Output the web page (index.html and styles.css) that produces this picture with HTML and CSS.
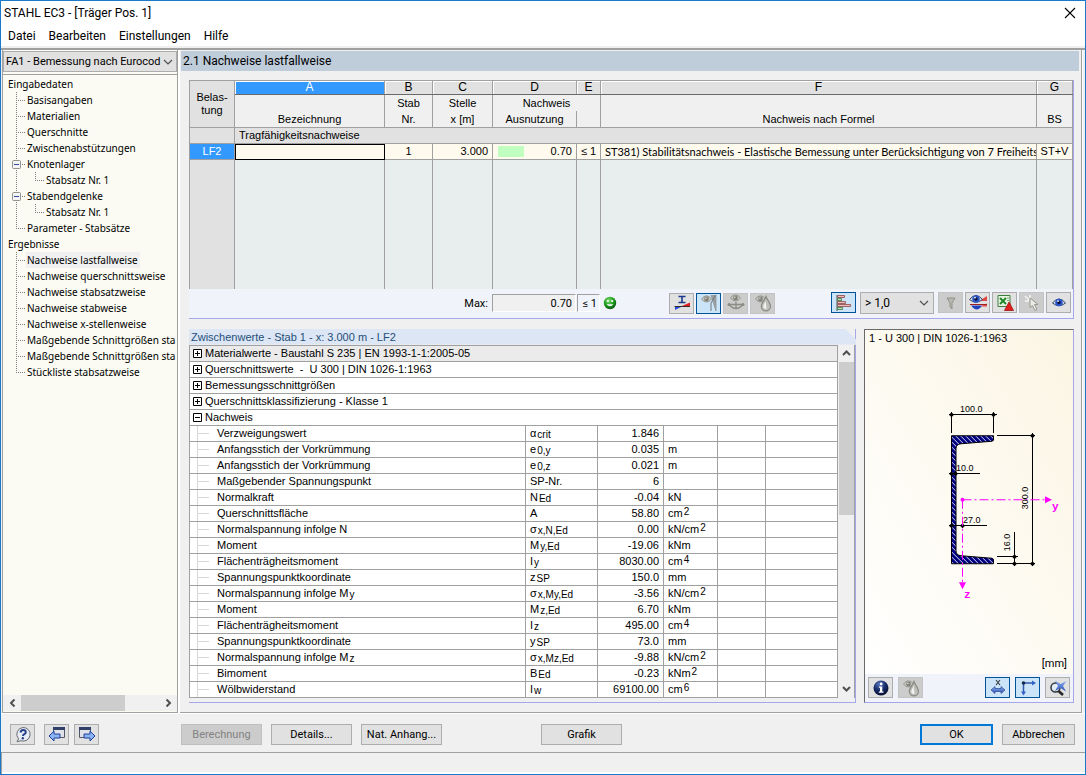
FILE: index.html
```html
<!DOCTYPE html>
<html lang="de">
<head>
<meta charset="utf-8">
<title>STAHL EC3 - [Träger Pos. 1]</title>
<link rel="stylesheet" href="styles.css">
</head>
<body>
<svg class="defs" aria-hidden="true">
  <defs>
    <linearGradient id="gBlue" x1="0" y1="0" x2="0" y2="1"><stop offset="0" stop-color="#8fb0f0"/><stop offset="1" stop-color="#2a50b8"/></linearGradient>
    <radialGradient id="gGreen" cx=".4" cy=".3" r=".7"><stop offset="0" stop-color="#7fe070"/><stop offset=".6" stop-color="#1c9a1c"/><stop offset="1" stop-color="#0a5a10"/></radialGradient>
    <radialGradient id="gNavy" cx=".4" cy=".25" r=".8"><stop offset="0" stop-color="#5a78c0"/><stop offset=".5" stop-color="#182c6a"/><stop offset="1" stop-color="#060c28"/></radialGradient>
    <symbol id="chev" viewBox="0 0 10 6"><path d="M1 1l4 4 4-4" fill="none" stroke="#505050" stroke-width="1.2"/></symbol>
    <symbol id="sbchev" viewBox="0 0 9 6"><path d="M1 5l3.500-3.500L8 5" fill="none" stroke="#505050" stroke-width="2"/></symbol>
    <symbol id="eyegray" viewBox="0 0 12 8"><path d="M.5 4Q6-3 11.500 4Q6 10.500.5 4Z" fill="#c8c8c4" stroke="#909088"/><circle cx="6" cy="4" r="2.600" fill="#84847c"/><circle cx="5.300" cy="3.200" r=".8" fill="#e8e8e8"/></symbol>
    <symbol id="eyeblue" viewBox="0 0 14 10"><path d="M.5 5.500Q7-2.500 13.500 5.500Q7 11 .5 5.500Z" fill="#dfe6f8" stroke="#30405c"/><circle cx="7" cy="5" r="3.800" fill="#2c55c8"/><circle cx="7" cy="5" r="1.700" fill="#0a1440"/><circle cx="6" cy="3.600" r=".9" fill="#fff"/></symbol>
    <symbol id="drop" viewBox="0 0 20 18"><use href="#eyegray" x="2" y="1" width="11" height="8"/><path d="M13 2.500c1.500 4.500 4.500 6.500 4.500 9.800a4.600 4.600 0 0 1-9.200 0C8.300 9 11.500 7 13 2.500Z" fill="#c0c0ba" stroke="#8a8a84" stroke-width="1.200"/><path d="M12.500 7c-1 3-2.500 4-2 6.500q1 2 3 1Z" fill="#f2f2f2"/></symbol>
    <symbol id="plus" viewBox="0 0 9 9"><path d="M.5.5h8v8h-8zM2 4.500h5M4.500 2v5" fill="#fff" stroke="#000"/></symbol>
    <symbol id="minus" viewBox="0 0 9 9"><path d="M.5.5h8v8h-8zM2 4.500h5" fill="#fff" stroke="#000"/></symbol>
    <symbol id="tminus" viewBox="0 0 9 9"><rect x=".5" y=".5" width="8" height="8" rx="1" fill="#f4f4f4" stroke="#919191"/><path d="M2 4.500h5" stroke="#3048a0"/></symbol>
    <pattern id="hatch" width="5" height="5" patternUnits="userSpaceOnUse"><rect width="5" height="5" fill="#000080"/><path d="M-1-1l7 7M-1 4l2 2M4-1l2 2" stroke="#d8d8f4" stroke-width="1"/></pattern>
  </defs>
</svg>

<div class="window">
  <header class="titlebar">
    <h1>STAHL EC3 - [Träger Pos. 1]</h1>
    <button class="close" aria-label="Schließen"><svg width="12" height="12" viewBox="0 0 12 12"><path d="M1 1l10 10M11 1L1 11" stroke="#000" stroke-width="1.100"/></svg></button>
  </header>
  <nav class="menu" aria-label="Hauptmenü">
    <button>Datei</button><button>Bearbeiten</button><button>Einstellungen</button><button>Hilfe</button>
  </nav>

  <main class="main">
    <aside class="side">
      <div class="combo case">
        <select aria-label="Bemessungsfall"><option>FA1 - Bemessung nach Eurocod</option></select>
        <svg width="10" height="6"><use href="#chev"/></svg>
      </div>
      <ul class="tree">
        <li><a href="#">Eingabedaten</a></li>
        <li><i class="mid"></i><a href="#">Basisangaben</a></li>
        <li><i class="mid"></i><a href="#">Materialien</a></li>
        <li><i class="mid"></i><a href="#">Querschnitte</a></li>
        <li><i class="mid"></i><a href="#">Zwischenabstützungen</a></li>
        <li><button class="mid fold" aria-label="Knotenlager einklappen"><svg width="9" height="9"><use href="#tminus"/></svg></button><a href="#">Knotenlager</a></li>
        <li><i class="line"></i><i class="end"></i><a href="#">Stabsatz Nr. 1</a></li>
        <li><button class="mid fold" aria-label="Stabendgelenke einklappen"><svg width="9" height="9"><use href="#tminus"/></svg></button><a href="#">Stabendgelenke</a></li>
        <li><i class="line"></i><i class="end"></i><a href="#">Stabsatz Nr. 1</a></li>
        <li><i class="end"></i><a href="#">Parameter - Stabsätze</a></li>
        <li><a href="#">Ergebnisse</a></li>
        <li><i class="mid"></i><a href="#" class="sel">Nachweise lastfallweise</a></li>
        <li><i class="mid"></i><a href="#">Nachweise querschnittsweise</a></li>
        <li><i class="mid"></i><a href="#">Nachweise stabsatzweise</a></li>
        <li><i class="mid"></i><a href="#">Nachweise stabweise</a></li>
        <li><i class="mid"></i><a href="#">Nachweise x-stellenweise</a></li>
        <li><i class="mid"></i><a href="#">Maßgebende Schnittgrößen sta</a></li>
        <li><i class="mid"></i><a href="#">Maßgebende Schnittgrößen sta</a></li>
        <li><i class="end"></i><a href="#">Stückliste stabsatzweise</a></li>
      </ul>
      <div class="hscroll">
        <button aria-label="Nach links"><svg width="9" height="6" class="left"><use href="#sbchev"/></svg></button>
        <div class="track"><div class="thumb"></div></div>
        <button aria-label="Nach rechts"><svg width="9" height="6" class="right"><use href="#sbchev"/></svg></button>
      </div>
    </aside>

    <section class="content">
      <h2>2.1 Nachweise lastfallweise</h2>
      <div class="body">
        <div class="results">
          <table class="grid">
            <colgroup><col class="c0"><col class="cA"><col class="cB"><col class="cC"><col class="cD"><col class="cE"><col><col class="cG"></colgroup>
            <thead>
              <tr class="letters"><th rowspan="3" class="corner">Belas-<br>tung</th><th class="on">A</th><th>B</th><th>C</th><th>D</th><th>E</th><th>F</th><th>G</th></tr>
              <tr class="names"><th rowspan="2" class="low">Bezeichnung</th><th rowspan="2">Stab<br>Nr.</th><th rowspan="2">Stelle<br>x [m]</th><th colspan="2" class="span">Nachweis</th><th rowspan="2" class="low">Nachweis nach Formel</th><th rowspan="2" class="low">BS</th></tr>
              <tr class="names"><th class="under">Ausnutzung</th><th class="under"></th></tr>
            </thead>
            <tbody>
              <tr class="group"><td class="raised"></td><td colspan="7">Tragfähigkeitsnachweise</td></tr>
              <tr class="data"><th scope="row">LF2</th><td class="focus"></td><td class="ctr">1</td><td class="num">3.000</td><td class="num"><div class="use"><span class="bar"></span>0.70</div></td><td class="ctr">≤ 1</td><td class="txt">ST381) Stabilitätsnachweis - Elastische Bemessung unter Berücksichtigung von 7 Freiheits</td><td class="ctr">ST+V</td></tr>
              <tr class="empty"><td></td><td></td><td></td><td></td><td></td><td></td><td></td><td></td></tr>
            </tbody>
          </table>
          <div class="tools">
            <div class="max">
              <label for="max">Max:</label><input id="max" value="0.70" readonly><output>≤ 1</output>
              <svg width="14" height="14" viewBox="0 0 14 14"><circle cx="7" cy="7" r="6.200" fill="url(#gGreen)"/><circle cx="4.800" cy="5" r="1.100" fill="#fff"/><circle cx="9.200" cy="5" r="1.100" fill="#fff"/><path d="M3.500 8.200Q7 12.500 10.500 8.200Z" fill="#fff"/></svg>
            </div>
            <div class="icons view">
              <button class="ib" aria-label="Querschnittswerte"><svg viewBox="0 0 20 18"><path d="M6.500 2.500h7M6.500 8.500h7M10 2.500v6" stroke="#1c3a8c" stroke-width="1.600"/><path d="M3 12.500h7L3 16Z" fill="#2848d8"/><path d="M10 12h8V8.500Z" fill="#e02020"/><path d="M2.500 12.500h15.500" stroke="#303030"/></svg></button>
              <button class="ib on" aria-label="Verlauf"><svg viewBox="0 0 20 18"><use href="#eyegray" x="2" y="1" width="11" height="8"/><path d="M12 1h5v16Z" fill="#9aa0a0"/><path d="M17 1v16l-5-16" fill="none" stroke="#8c9494" stroke-width=".8"/><path d="M16.500 1L12 9v8" fill="none" stroke="#70787c" stroke-width="1"/></svg></button>
              <button class="ib off" disabled aria-label="Biegelinie"><svg viewBox="0 0 20 18"><use href="#eyegray" x="4" y="0" width="11" height="8"/><path d="M2 10.500h16M3 10.500q7 8 14 0M10 8v7" fill="none" stroke="#8c8c84" stroke-width="1.300"/><circle cx="3" cy="10.500" r="1.500" fill="#8c8c84"/><circle cx="17" cy="10.500" r="1.500" fill="#8c8c84"/></svg></button>
              <button class="ib off" disabled aria-label="Farben"><svg viewBox="0 0 20 18"><use href="#drop" width="20" height="18"/></svg></button>
            </div>
            <div class="icons filter">
              <button class="ib on" aria-label="Balken"><svg viewBox="0 0 20 18"><path d="M3 1v16" stroke="#406060"/><g stroke-width=".8"><path d="M3.500 1.500h7v2h-7z" fill="#f4b8b8" stroke="#884848"/><path d="M3.500 4.500h4v2h-4z" fill="#b8e8b8" stroke="#407040"/><path d="M3.500 7.500h8v2h-8z" fill="#f4b8b8" stroke="#884848"/><path d="M3.500 10.500h13v2h-13z" fill="#f4b8b8" stroke="#884848"/><path d="M3.500 13.500h5v2h-5z" fill="#b8e8b8" stroke="#407040"/></g></svg></button>
              <div class="combo limit"><select aria-label="Filter"><option>&gt; 1,0</option></select><svg width="10" height="6"><use href="#chev"/></svg></div>
              <button class="ib off" disabled aria-label="Filtern"><svg viewBox="0 0 20 18"><path d="M6 4h8L11 9v6l-2-2V9Z" fill="#b8b8b0" stroke="#92928c"/></svg></button>
              <button class="ib" aria-label="Verläufe"><svg viewBox="0 0 20 18"><path d="M11 7l8-5v5ZM12 12.500l7-3v3Z" fill="#e04848"/><path d="M2 10.500h17" stroke="#a02020" stroke-width="1"/><path d="M3 11.500h11q-5 8-11 0Z" fill="#2040c0"/><use href="#eyeblue" x="1" y="0" width="14" height="10"/></svg></button>
              <button class="ib" aria-label="Excel-Export"><svg viewBox="0 0 20 18"><path d="M3 1.500h12v11H3z" fill="#e8f4e4" stroke="#3c7c3c"/><path d="M5 4l6 6M11 4l-6 6" stroke="#208828" stroke-width="2"/><path d="M12 4h2M12 6.500h2" stroke="#70a870"/><path d="M14 8l4.500 8.500h-9Z" fill="#e02020" stroke="#a01010" stroke-width=".8"/></svg></button>
              <button class="ib off" disabled aria-label="Auswahl"><svg viewBox="0 0 20 18"><path d="M3 2l4 4M3 7h4M8 1v4" stroke="#f4f4f4" stroke-width="1.500"/><path d="M8 4l8 6.500h-3.500l2.500 5-2 1-2.500-5L8 13.500Z" fill="#ecece8" stroke="#989890"/></svg></button>
              <button class="ib" aria-label="Ansicht"><svg viewBox="0 0 20 18"><use href="#eyeblue" x="3" y="3" width="14" height="11"/></svg></button>
            </div>
          </div>
        </div>

        <div class="lower">
          <section class="details">
            <h3>Zwischenwerte - Stab 1 - x: 3.000 m - LF2</h3>
            <div class="scroller">
              <table class="values">
                <colgroup><col><col class="v1"><col class="v2"><col class="v3"><col class="v4"><col class="v5"></colgroup>
                <tbody>
                  <tr class="head first"><td colspan="6"><svg width="9" height="9"><use href="#plus"/></svg>Materialwerte - Baustahl S 235 | EN 1993-1-1:2005-05</td></tr>
                  <tr class="head"><td colspan="6"><svg width="9" height="9"><use href="#plus"/></svg>Querschnittswerte&nbsp; -&nbsp; U 300 | DIN 1026-1:1963</td></tr>
                  <tr class="head"><td colspan="6"><svg width="9" height="9"><use href="#plus"/></svg>Bemessungsschnittgrößen</td></tr>
                  <tr class="head"><td colspan="6"><svg width="9" height="9"><use href="#plus"/></svg>Querschnittsklassifizierung - Klasse 1</td></tr>
                  <tr class="head"><td colspan="6"><svg width="9" height="9"><use href="#minus"/></svg>Nachweis</td></tr>
                  <tr><td>Verzweigungswert</td><td>α<sub>crit</sub></td><td>1.846</td><td></td><td></td><td></td></tr>
                  <tr><td>Anfangsstich der Vorkrümmung</td><td>e<sub>0,y</sub></td><td>0.035</td><td>m</td><td></td><td></td></tr>
                  <tr><td>Anfangsstich der Vorkrümmung</td><td>e<sub>0,z</sub></td><td>0.021</td><td>m</td><td></td><td></td></tr>
                  <tr><td>Maßgebender Spannungspunkt</td><td>SP-Nr.</td><td>6</td><td></td><td></td><td></td></tr>
                  <tr><td>Normalkraft</td><td>N<sub>Ed</sub></td><td>-0.04</td><td>kN</td><td></td><td></td></tr>
                  <tr><td>Querschnittsfläche</td><td>A</td><td>58.80</td><td>cm<sup>2</sup></td><td></td><td></td></tr>
                  <tr><td>Normalspannung infolge N</td><td>σ<sub>x,N,Ed</sub></td><td>0.00</td><td>kN/cm<sup>2</sup></td><td></td><td></td></tr>
                  <tr><td>Moment</td><td>M<sub>y,Ed</sub></td><td>-19.06</td><td>kNm</td><td></td><td></td></tr>
                  <tr><td>Flächenträgheitsmoment</td><td>I<sub>y</sub></td><td>8030.00</td><td>cm<sup>4</sup></td><td></td><td></td></tr>
                  <tr><td>Spannungspunktkoordinate</td><td>z<sub>SP</sub></td><td>150.0</td><td>mm</td><td></td><td></td></tr>
                  <tr><td>Normalspannung infolge M<sub>y</sub></td><td>σ<sub>x,My,Ed</sub></td><td>-3.56</td><td>kN/cm<sup>2</sup></td><td></td><td></td></tr>
                  <tr><td>Moment</td><td>M<sub>z,Ed</sub></td><td>6.70</td><td>kNm</td><td></td><td></td></tr>
                  <tr><td>Flächenträgheitsmoment</td><td>I<sub>z</sub></td><td>495.00</td><td>cm<sup>4</sup></td><td></td><td></td></tr>
                  <tr><td>Spannungspunktkoordinate</td><td>y<sub>SP</sub></td><td>73.0</td><td>mm</td><td></td><td></td></tr>
                  <tr><td>Normalspannung infolge M<sub>z</sub></td><td>σ<sub>x,Mz,Ed</sub></td><td>-9.88</td><td>kN/cm<sup>2</sup></td><td></td><td></td></tr>
                  <tr><td>Bimoment</td><td>B<sub>Ed</sub></td><td>-0.23</td><td>kNm<sup>2</sup></td><td></td><td></td></tr>
                  <tr><td>Wölbwiderstand</td><td>I<sub>w</sub></td><td>69100.00</td><td>cm<sup>6</sup></td><td></td><td></td></tr>
                </tbody>
              </table>
              <div class="vscroll">
                <button aria-label="Nach oben"><svg width="9" height="6"><use href="#sbchev"/></svg></button>
                <div class="track"><div class="thumb"></div></div>
                <button aria-label="Nach unten"><svg width="9" height="6" class="down"><use href="#sbchev"/></svg></button>
              </div>
            </div>
          </section>

          <section class="section-view">
            <div class="canvas">
              <svg class="drawing" viewBox="865 330 208 344" role="img" aria-label="Querschnitt U 300">
                <path d="M951.500 435.500h42v4.500l-1.500 1-31 2.500q-5 .5-5 5v102q0 4.500 5 5l31 2.500 1.500 1v4.500h-42z" fill="url(#hatch)" stroke="#000"/>
                <g stroke="#000" fill="none" shape-rendering="crispEdges">
                  <path d="M948.500 414.500h48M951.500 412v21M993.500 412v21M948.500 473.500h31M948.500 525.500h38M996.500 435.500h38M996.500 563.500h38M1032.500 433v133M996.500 556.500h21M1014.500 532v34"/>
                </g>
                <g fill="#000"><path id="d" d="M949 414.500l2.500-2.500 2.500 2.500-2.500 2.500z"/><use href="#d" x="42"/><use href="#d" y="59"/><use href="#d" x="4" y="59"/><use href="#d" y="111"/><use href="#d" x="11" y="111"/><use href="#d" x="81" y="21"/><use href="#d" x="81" y="149"/><use href="#d" x="63" y="142"/><use href="#d" x="63" y="149"/></g>
                <g stroke="#f0f" fill="none" stroke-dasharray="9 3 2 3"><path d="M962.500 499.500h83M962.500 499.500v83"/></g>
                <g fill="#f0f"><circle cx="962.500" cy="499.500" r="2"/><path d="M1045 496l7 3.500-7 3.500zM959 582l3.500 7 3.500-7z"/></g>
                <g class="dims"><text x="960" y="412">100.0</text><text x="956" y="471">10.0</text><text x="963" y="523">27.0</text><text transform="translate(1028 509) rotate(-90)">300.0</text><text transform="translate(1010 551) rotate(-90)">16.0</text></g>
                <g class="axes"><text x="1052" y="510">y</text><text x="964" y="598">z</text></g>
              </svg>
              <div class="caption">1 - U 300 | DIN 1026-1:1963</div>
              <div class="unit">[mm]</div>
            </div>
            <div class="viewbar">
              <div class="pair">
                <button class="ib" aria-label="Info"><svg viewBox="0 0 20 18"><circle cx="10" cy="9" r="7.500" fill="url(#gNavy)"/><circle cx="10.200" cy="5" r="1.400" fill="#fff"/><path d="M8 7.500h3.300v5H12.500v1.300H7.800v-1.300H9V8.800H8z" fill="#fff"/></svg></button>
                <button class="ib off" disabled aria-label="Farben"><svg viewBox="0 0 20 18"><use href="#drop" width="20" height="18"/></svg></button>
              </div>
              <div class="pair">
                <button class="ib on" aria-label="Bemaßung"><svg viewBox="0 0 20 18"><path d="M8 1l4 5M12 1l-4 5" stroke="#303840" stroke-width="1.100"/><path d="M3 11l4-3.500v2h6v-2l4 3.500-4 3.500v-2H7v2z" fill="url(#gBlue)" stroke="#284890" stroke-width=".7"/></svg></button>
                <button class="ib on" aria-label="Achsen"><svg viewBox="0 0 20 18"><path d="M5.500 4h11M5.500 4v11" stroke="#3058b0" stroke-width="1.500"/><path d="M14 1.500l4 2.500-4 2.500zM3 12.500l2.500 4 2.500-4z" fill="#3464c8"/><circle cx="5.500" cy="4" r="1.800" fill="#182848"/></svg></button>
                <button class="ib" aria-label="Zoom zurücksetzen"><svg viewBox="0 0 20 18"><circle cx="7.500" cy="8.500" r="4.500" fill="#e4ecf4" stroke="#303840" stroke-width="1.500"/><path d="M10.500 12l4.500 4" stroke="#282828" stroke-width="2.600"/><path d="M7 1.500l5.500 3.500 6-3-3.500 5 3 5.500-5.500-3.500-5.500 3 3-5z" fill="url(#gBlue)"/></svg></button>
              </div>
            </div>
          </section>
        </div>
      </div>
    </section>
  </main>

  <footer class="actions">
    <div class="nav">
      <button class="ib" aria-label="Hilfe"><svg viewBox="0 0 20 18"><path d="M10 1.500a6.800 6.800 0 1 1-2 13.200l-4 1 1.600-2.800A6.800 6.800 0 0 1 10 1.500Z" fill="#e8ecf4" stroke="#686c74"/><path d="M7.500 6.500Q8 4 10.300 4t2.500 2.200Q12.800 7.500 11 8.300q-1 .6-1 1.700" fill="none" stroke="#26408c" stroke-width="2"/><circle cx="9.800" cy="12.300" r="1.200" fill="#26408c"/></svg></button>
      <button class="ib" aria-label="Vorherige Maske"><svg viewBox="0 0 20 18"><path d="M6.500 1.500h11v10h-11z" fill="#dfe2e8" stroke="#505868"/><path d="M6 1h12v3H6z" fill="#304068"/><path d="M2 10l5-5v3h6v4H7v3z" fill="#8cb4f4" stroke="#1c409c"/></svg></button>
      <button class="ib" aria-label="Nächste Maske"><svg viewBox="0 0 20 18"><path d="M2.500 1.500h11v10h-11z" fill="#dfe2e8" stroke="#505868"/><path d="M2 1h12v3H2z" fill="#304068"/><path d="M18 10l-5-5v3H7v4h6v3z" fill="#8cb4f4" stroke="#1c409c"/></svg></button>
    </div>
    <div class="mid-actions"><button class="btn" disabled>Berechnung</button><button class="btn">Details...</button><button class="btn">Nat. Anhang...</button></div>
    <button class="btn graphic">Grafik</button>
    <div class="confirm"><button class="btn ok">OK</button><button class="btn cancel">Abbrechen</button></div>
  </footer>
  <div class="status" role="status"></div>
</div>
</body>
</html>
```
FILE: styles.css
```css
* { box-sizing: border-box; }
body { margin: 0; font-family: Roboto, "Liberation Sans", sans-serif; font-size: 11px; color: #000; }
button, select, input { font: inherit; color: inherit; margin: 0; padding: 0; border-radius: 0; }
svg { display: block; flex: none; }
.defs { width: 0; height: 0; position: absolute; }

.window { min-height: 100vh; display: flex; flex-direction: column; border: 1px solid #1979ca; background: #f0f0f0; }
.titlebar { height: 24px; display: flex; align-items: center; justify-content: space-between; padding: 0 9px 0 3px; background: #fff; }
.titlebar h1 { margin: 0; font-size: 12px; font-weight: 400; }
.close { border: 0; background: none; }
.menu { height: 23px; display: flex; gap: 13px; padding: 0 7px; background: #fff; font-size: 12px; border-bottom: 2px solid #f0f0f0; }
.menu button { border: 0; background: none; }

.main { flex: 1; display: flex; border-top: 2px solid #a0a0a0; border-bottom: 1px solid #fff; }

.side { width: 176px; margin-left: 1px; padding-top: 1px; display: flex; flex-direction: column; background: #fbfbf3; border: solid #a0a0a0; border-width: 0 1px 1px; }
.combo { display: flex; align-items: center; background: #e1e1e1; border: 1px solid #adadad; }
.combo select { flex: 1; min-width: 0; height: 100%; appearance: none; border: 0; background: none; }
.case { height: 21px; padding: 0 3px 0 2px; }
.tree { list-style: none; flex: 1; margin: 2px 0 0; padding: 1px 0 0 5px; border-top: 1px solid #a0a0a0; overflow: hidden; font-family: "Noto Sans", sans-serif; font-size: 10px; }
.tree li { height: 16px; display: flex; white-space: nowrap; }
.tree a { color: inherit; text-decoration: none; line-height: 16px; }
.tree li > :not(a) + a { padding: 0 2px 0 1px; }
.tree a.sel { background: #f0f0f0; }
.tree i, .fold { flex: none; height: 16px; background-repeat: no-repeat; }
.mid, .end { width: 18px; border: 0;
  background-image: repeating-linear-gradient(#808080 0 1px, transparent 1px 2px), repeating-linear-gradient(90deg, #808080 0 1px, transparent 1px 2px); }
.mid { background-color: transparent; background-position: 8px 0, 8px 8px; background-size: 1px 16px, 9px 1px; }
.end { background-position: 8px 0, 8px 8px; background-size: 1px 9px, 9px 1px; }
.line { width: 19px; background: repeating-linear-gradient(#808080 0 1px, transparent 1px 2px) 8px 0 / 1px 16px; }
.fold { display: flex; align-items: center; padding-left: 4px; }
.hscroll { display: flex; height: 16px; background: #f0f0f0; margin-bottom: 1px; }
.hscroll button { width: 18px; border: 0; background: none; display: flex; align-items: center; justify-content: center; }
.hscroll .track { flex: 1; }
.hscroll .thumb { width: 75%; height: 100%; background: #cdcdcd; }
.left { transform: rotate(-90deg); }
.right { transform: rotate(90deg); }
.down { transform: rotate(180deg); }

.content { flex: 1; min-width: 0; display: flex; flex-direction: column; margin: 0 3px 0 2px; padding-top: 1px; border: solid #a0a0a0; border-width: 0 1px 1px 0; box-shadow: -2px 0 #fff, 1px 0 #fff; }
.content h2 { margin: 0 2px 0 1px; padding-left: 2px; background: #bfcddb; font-size: 12px; font-weight: 400; line-height: 20px; }
.body { flex: 1; display: flex; flex-direction: column; gap: 10px; padding: 9px 7px 9px 9px; }

.results { border: solid #a6a6ea; border-width: 0 1px 1px 0; background: #f0f4fa; }
table { width: 100%; table-layout: fixed; border-collapse: collapse; font-family: "Liberation Sans", Arial, sans-serif; }
th, td { padding: 0; font-weight: 400; border: 1px solid #a0a0a0; white-space: nowrap; overflow: hidden; }
.c0 { width: 45px; } .cA { width: 150px; } .cB { width: 48px; } .cC { width: 60px; } .cD { width: 84px; } .cE { width: 24px; } .cG { width: 36px; }
.letters th { height: 14px; line-height: 13px; background: #e1e1e1; border-bottom-color: #696969; box-shadow: inset 1px 1px #fff; font-size: 12px; }
.letters th.on { background: #39f; color: #fff; }
.letters th.corner { box-shadow: none; line-height: 13px; border-bottom-color: #a0a0a0; font-size: 11px; }
.names th { height: 16px; line-height: 16px; background: #f0f0f0; vertical-align: middle; }
.names th.low { vertical-align: bottom; }
.names .span { border-bottom: 0; }
.names .under { border-top: 0; }
.group td { height: 16px; line-height: 15px; padding-left: 4px; background: #e1e1e1; }
.data th { background: #39f; color: #fff; }
.data th, .data td { height: 16px; line-height: 15px; }
.data td { background: #fffaee; }
.data .focus { outline: 1px solid #000; outline-offset: -1px; }
.ctr { text-align: center; }
.num { text-align: right; padding-right: 4px; }
.data .txt { padding-left: 4px; font-family: Lato, sans-serif; }
.use { display: flex; align-items: center; justify-content: space-between; padding-left: 5px; }
.bar { width: 26px; height: 11px; background: #c0ffc0; }
.empty td { height: 129px; background: #e8eeee; border-bottom: 0; }
.empty td:first-child { background: #e1e1e1; }

.tools { display: flex; align-items: center; height: 29px; padding-right: 2px; }
.max { display: flex; align-items: center; margin-left: auto; margin-right: 52px; }
.max label { margin-right: 4px; }
.max input, .max output { height: 18px; line-height: 17px; border: solid; border-width: 1px; border-color: #a0a0a0 #fff #fff #a0a0a0; background: #f0f4fa; text-align: right; }
.max input { width: 84px; padding-right: 3px; background: #f0f0f0; }
.max output { width: 23px; padding-right: 2px; margin: 0 3px 0 1px; }
.icons { display: flex; gap: 2px; }
.view { margin-right: 56px; }
.limit { width: 74px; height: 22px; margin: 0 2px; padding: 0 4px; font-size: 12px; }
.ib { width: 25px; height: 21px; padding: 0; display: flex; align-items: center; justify-content: center; background: #e1e1e1; border: 1px solid #adadad; }
.ib svg { width: 20px; height: 18px; }
.ib.on { background: #cce4f7; border-color: #005499; }
.ib.off { background: #ccc; border-color: #c4c4c4; }

.lower { flex: 1; display: flex; gap: 8px; }
.details { flex: 1; min-width: 0; display: flex; flex-direction: column; border: solid #a6a6ea; border-width: 0 1px 1px 0; }
.details h3 { margin: 0 -1px 0 0; padding-left: 2px; font: 400 11px/16px "Liberation Sans", Arial, sans-serif; color: #1f4e79; background: #dce6f4; box-shadow: 1px 0 #f0f0f0; clip-path: polygon(0 0, calc(100% - 11px) 0, 100% 11px, 100% 100%, 0 100%); }
.scroller { display: flex; }
.values { flex: 1; min-width: 0; width: auto; background: #fff; }
.v1 { width: 72px; } .v2 { width: 66px; } .v3 { width: 54px; } .v4 { width: 48px; } .v5 { width: 72px; }
.values td { height: 16px; line-height: 15px; padding-left: 4px; }
.values td:first-child { padding-left: 27px; background: linear-gradient(#d8d8d8, #d8d8d8) 7px 0 / 1px 100% no-repeat, linear-gradient(#d8d8d8, #d8d8d8) 8px 7px / 11px 1px no-repeat; }
.values td:nth-child(3) { text-align: right; padding: 0 4px 0 0; }
.values .head td { background: none; padding-left: 3px; }
.values .first td { background: #ebebeb; }
.head svg { display: inline-block; vertical-align: -1px; margin-right: 3px; }
sub, sup { font-size: 10px; line-height: 0; margin-left: 1px; }
sub { vertical-align: -1px; }
sup { vertical-align: 2px; }
.vscroll { width: 17px; display: flex; flex-direction: column; background: #f0f0f0; padding-left: 1px; border-right: 1px solid #a0a0a0; }
.vscroll button { height: 17px; border: 0; background: none; display: flex; align-items: center; justify-content: center; }
.vscroll .track { flex: 1; }
.vscroll .thumb { height: 48%; background: #cdcdcd; }

.section-view { width: 210px; display: flex; flex-direction: column; border: solid; border-width: 1px; border-color: #696969 #a6a6ea #a6a6ea #696969; }
.canvas { flex: 1; display: grid; background: linear-gradient(to top right, #fff, #fbf5e3); }
.canvas > * { grid-area: 1 / 1; }
.drawing { width: 100%; height: 100%; }
.caption { padding: 2px 4px; font-family: "Liberation Sans", Arial, sans-serif; }
.unit { align-self: end; justify-self: end; padding: 0 6px 4px 0; }
.dims { font: 10px "Liberation Sans", Arial, sans-serif; font-size: 9px; }
.axes { font: 700 11px "Liberation Mono", monospace; fill: #f0f; }
.viewbar { display: flex; justify-content: space-between; height: 28px; padding: 3px 3px 0; background: #f0f4fa; }
.pair { display: flex; gap: 5px; }

.actions { display: flex; align-items: flex-start; height: 38px; padding: 10px 10px 0 9px; }
.nav { display: flex; gap: 5px; }
.nav button:first-child { margin-right: 4px; }
.mid-actions { display: flex; gap: 9px; margin-left: 82px; }
.btn { width: 81px; height: 21px; background: #e1e1e1; border: 1px solid #adadad; white-space: nowrap; }
.btn:disabled { background: #ccc; border-color: #bfbfbf; color: #838383; }
.graphic { margin-left: 99px; }
.confirm { display: flex; gap: 9px; margin-left: auto; }
.ok, .cancel { width: 73px; }
.ok { border: 2px solid #0078d7; }
.status { height: 22px; border-top: 1px solid #a0a0a0; border-left: 1px solid #a0a0a0; box-shadow: inset 0 -2px #fff; }
```
